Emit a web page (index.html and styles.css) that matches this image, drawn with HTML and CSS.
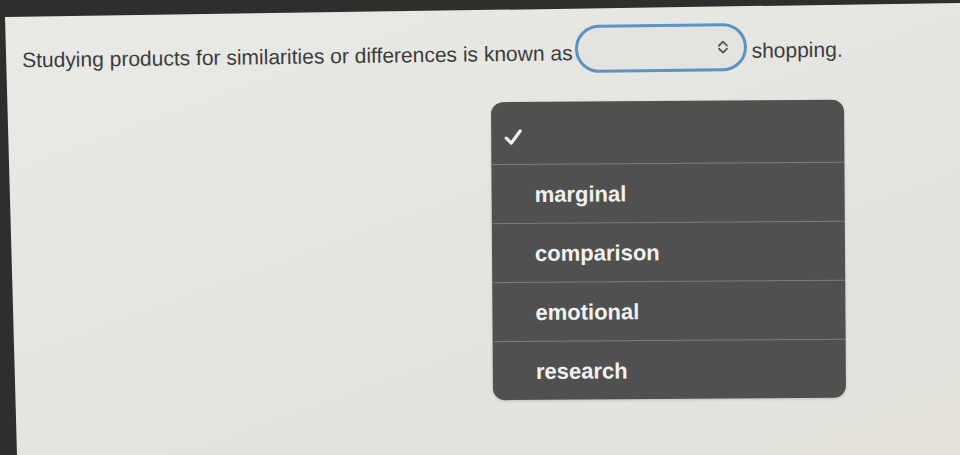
FILE: index.html
```html
<!DOCTYPE html>
<html lang="en">
<head>
    <meta charset="UTF-8">
    <meta name="viewport" content="width=device-width, initial-scale=1.0">
    <title>Question</title>
    <link rel="stylesheet" href="styles.css">
</head>
<body>
    <div class="screen">
        <!-- sentence with the blank -->
        <div class="sentence">
            <span class="words">Studying products for similarities or differences is known as</span>
            <div class="select">
                <svg class="chevrons" width="14" height="16" viewBox="0 0 14 16">
                    <path d="M3 6.5 L7 2.5 L11 6.5 M3 9.5 L7 13.5 L11 9.5" fill="none" stroke="#555" stroke-width="1.8" stroke-linecap="round" stroke-linejoin="round"/>
                </svg>
            </div>
            <span class="words">shopping.</span>
        </div>

        <!-- open option list -->
        <div class="menu">
            <div class="option option-check">
                <svg width="20" height="18" viewBox="0 0 20 18">
                    <path d="M3 10 L8 15 L17 3" fill="none" stroke="#f2f2f2" stroke-width="3.2" stroke-linecap="round" stroke-linejoin="round"/>
                </svg>
            </div>
            <div class="option">marginal</div>
            <div class="option">comparison</div>
            <div class="option">emotional</div>
            <div class="option">research</div>
        </div>
    </div>
</body>
</html>
```

FILE: styles.css
```css
/* dark frame around the page */
body {
    margin: 0;
    background-color: #2e2e2e;
    height: 455px;
    overflow: hidden;
}

.screen {
    height: 455px;
    box-sizing: border-box;
    padding: 27px 0 0 22px;
    background: linear-gradient(160deg, #e9e9e6 0%, #e4e4e0 55%, #e3e1da 100%);
    clip-path: polygon(5px 17px, 960px 3px, 960px 455px, 17px 455px);
    font-family: "Liberation Sans", Arial, sans-serif;
}

/* sentence row, slightly tilted like the rest of the screen */
.sentence {
    display: flex;
    width: fit-content;
    align-items: center;
    font-size: 21px;
    color: #3c3c3c;
    transform: rotate(-0.75deg);
}

.words {
    padding-top: 7px;
}

.select {
    width: 152px;
    height: 42px;
    margin: 0 5px 0 2px;
    border: 3px solid #5b93c2;
    border-radius: 24px;
    background-color: #e3e3e0;
    display: flex;
    align-items: center;
    justify-content: flex-end;
    padding-right: 14px;
}

/* option list */
.menu {
    width: 353px;
    margin: 26px 0 0 470px;
    background-color: #505050;
    border-radius: 12px;
    overflow: hidden;
    box-shadow: 0 1px 3px rgba(0, 0, 0, 0.15);
    transform: rotate(-0.4deg);
}

.option {
    height: 56px;
    border-top: 1px solid #7c7c7a;
    display: flex;
    align-items: center;
    padding: 2px 0 0 43px;
    color: #f1f1f1;
    font-size: 22px;
    font-weight: bold;
}

.option-check {
    height: 54px;
    border-top: none;
    padding: 8px 0 0 12px;
}
```
